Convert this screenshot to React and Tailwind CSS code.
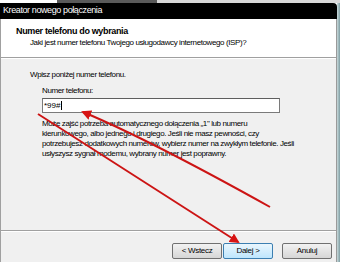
import React from "react";

const font = { fontFamily: '"Liberation Sans", Arial, sans-serif' };

const Button = ({ label, focused }) => (
  <div
    className={`w-[50px] h-[16px] flex items-center justify-center rounded-[2px] border text-[8px] tracking-[-0.3px] text-black ${
      focused
        ? "border-[#3c7fb1] bg-gradient-to-b from-[#eaf6fd] to-[#bee6fd]"
        : "border-[#707070] bg-gradient-to-b from-[#f2f2f2] to-[#d6d6d6]"
    }`}
  >
    {label}
  </div>
);

export default function App() {
  return (
    <div className="relative w-[340px] h-[262px] bg-white overflow-hidden" style={font}>
      {/* strip of what is behind the window */}
      <div className="h-[3px] flex">
        <div className="w-[57px] bg-white" />
        <div className="w-[100px] bg-[#5a5a5a]" />
        <div className="flex-1 bg-[#d8d8d8]" />
      </div>

      <div className="flex h-[259px]">
        <div className="flex-1 flex flex-col">
          {/* title bar */}
          <div className="h-[16px] bg-black rounded-tr-[4px] flex items-center pl-[3px] text-white text-[9px] tracking-[-0.4px]">
            Kreator nowego połączenia
          </div>

          <div className="flex-1 flex border-l border-[#a0a0a0]">
            <div className="flex-1 flex flex-col">
              {/* header */}
              <div className="h-[39px] bg-white pl-[15px] pt-[6px] border-b border-[#a0a0a0]">
                <div className="text-[9px] font-bold text-black leading-[12px] tracking-[-0.35px]">
                  Numer telefonu do wybrania
                </div>
                <div className="pl-[14px] text-[8px] text-black leading-[11px] tracking-[-0.4px]">
                  Jaki jest numer telefonu Twojego usługodawcy internetowego (ISP)?
                </div>
              </div>

              {/* body */}
              <div className="flex-1 bg-[#f0f0f0] border-t border-white flex flex-col">
                <div className="h-[171px] pl-[29px] pt-[10px] text-[8px] text-black tracking-[-0.4px]">
                  <div className="leading-[11px]">Wpisz poniżej numer telefonu.</div>
                  <div className="pl-[12px] pt-[5px]">
                    <div className="leading-[11px]">Numer telefonu:</div>
                    <div className="mt-[2px] w-[238px] h-[15px] bg-white border border-[#7a7a7a] border-t-[#5e5e5e] flex items-center pl-[1px] text-[8px] tracking-normal">
                      *99#
                      <span className="w-px h-[9px] bg-black ml-px" />
                    </div>
                    <div className="mt-[6px] leading-[10px] whitespace-nowrap">
                      <div>Może zajść potrzeba automatycznego dołączenia „1" lub numeru</div>
                      <div>kierunkowego, albo jednego i drugiego. Jeśli nie masz pewności, czy</div>
                      <div>potrzebujesz dodatkowych numerów, wybierz numer na zwykłym telefonie. Jeśli</div>
                      <div>usłyszysz sygnał modemu, wybrany numer jest poprawny.</div>
                    </div>
                  </div>
                </div>

                <div className="border-t border-[#a0a0a0] border-b border-b-white" />

                <div className="flex justify-end items-start pt-[11px] pr-[4px] gap-[1px]">
                  <Button label="< Wstecz" />
                  <Button label="Dalej >" focused />
                  <div className="w-[7px]" />
                  <Button label="Anuluj" />
                </div>
              </div>
            </div>
            <div className="w-px bg-[#9a9a9a]" />
          </div>
        </div>
        {/* right window frame */}
        <div className="w-[3px] bg-gradient-to-r from-[#c9d9db] to-[#7e9ea3]" />
      </div>

      {/* red annotation arrows */}
      <svg className="absolute inset-0 pointer-events-none" width="340" height="262">
        <defs>
          <marker id="head" viewBox="0 0 10 10" refX="8" refY="5" markerWidth="5" markerHeight="5" orient="auto-start-reverse">
            <path d="M0,0 L10,5 L0,10 z" fill="#d71414" />
          </marker>
        </defs>
        <path d="M270,207 Q150,140 83,112" stroke="#cc1414" strokeWidth="2" fill="none" markerEnd="url(#head)" />
        <path d="M38,114 L238,242" stroke="#cc1414" strokeWidth="2" fill="none" markerEnd="url(#head)" />
      </svg>
    </div>
  );
}
